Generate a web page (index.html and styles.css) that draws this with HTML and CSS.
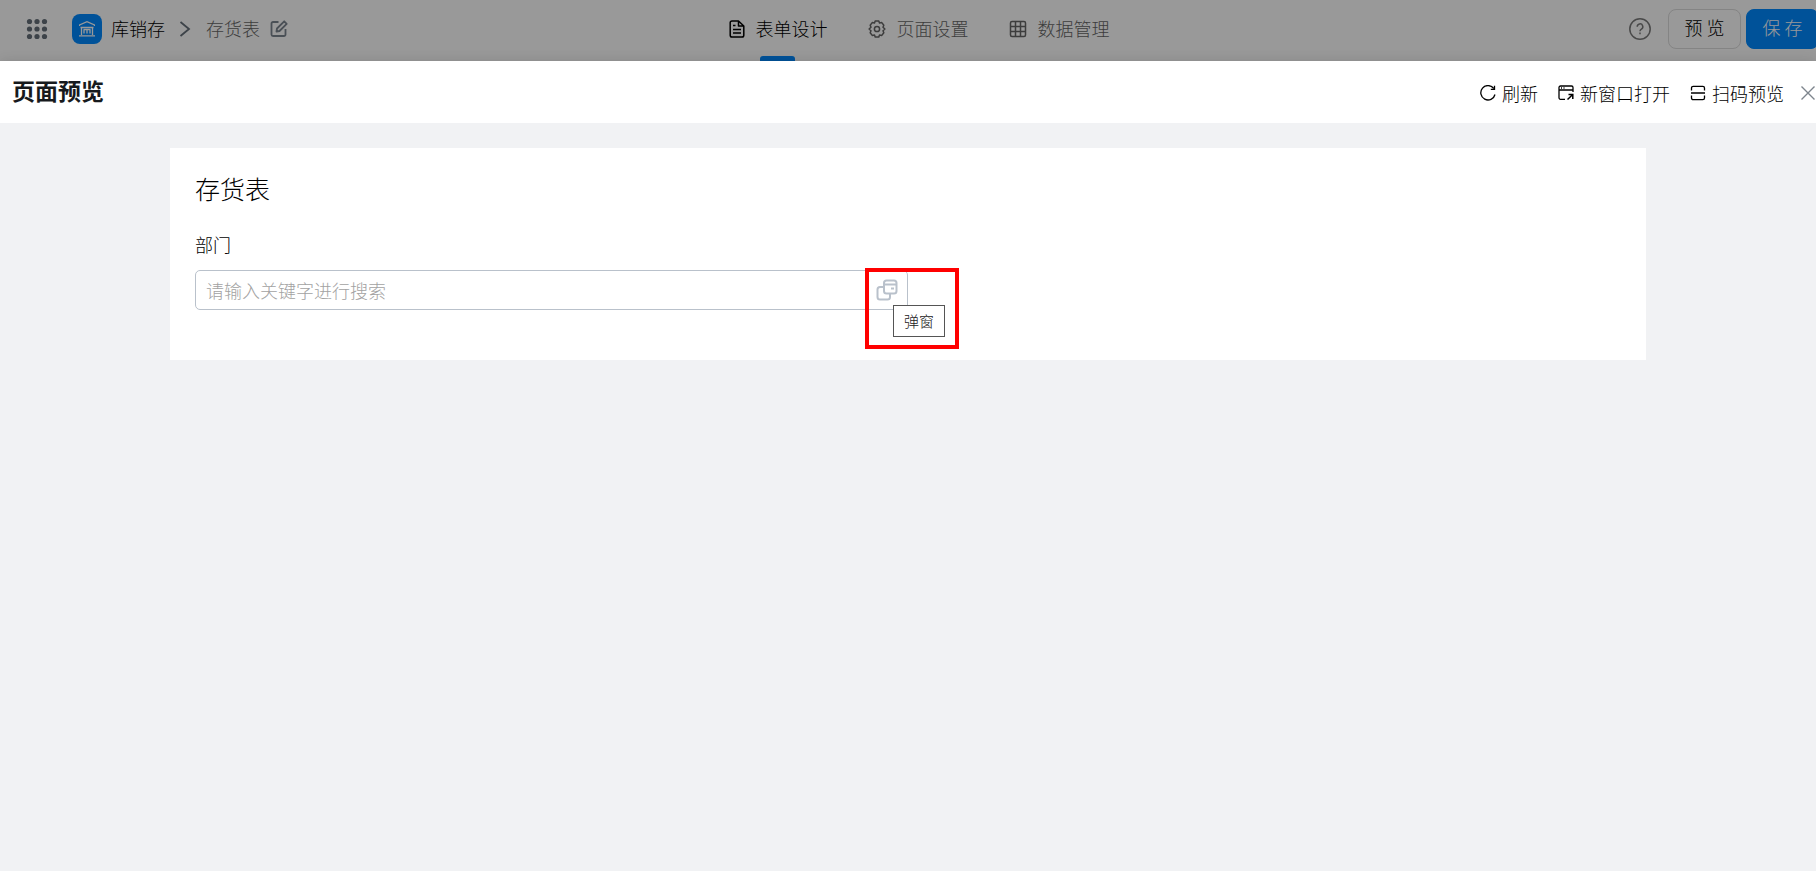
FILE: index.html
```html
<!DOCTYPE html>
<html lang="zh-CN">
<head>
    <meta charset="UTF-8">
    <meta name="viewport" content="width=device-width, initial-scale=1.0">
    <title>页面预览</title>
    <link rel="stylesheet" href="styles.css">
</head>
<body>
    <header class="topbar">
        <div class="crumbs">
            <button class="icon-btn apps" aria-label="应用">
                <svg width="22" height="22" viewBox="0 0 22 22" fill="#66707a">
                    <circle cx="3.5" cy="3.5" r="2.6"/><circle cx="11" cy="3.5" r="2.6"/><circle cx="18.5" cy="3.5" r="2.6"/>
                    <circle cx="3.5" cy="11" r="2.6"/><circle cx="11" cy="11" r="2.6"/><circle cx="18.5" cy="11" r="2.6"/>
                    <circle cx="3.5" cy="18.5" r="2.6"/><circle cx="11" cy="18.5" r="2.6"/><circle cx="18.5" cy="18.5" r="2.6"/>
                </svg>
            </button>
            <span class="app-logo">
                <svg width="16" height="18" viewBox="0 0 16 18" fill="none" stroke="#fff" stroke-width="1.3">
                    <path d="M.5 6V5L8 1.600 15.500 5v1"/>
                    <path d="M1.500 7.500h13M2.500 7.500V15M13.500 7.500V15M0 15.800h16"/>
                    <path d="M5 9.500v4M8 9.500v4M11 9.500v4M4.500 9.500h7"/>
                </svg>
            </span>
            <a href="#" class="crumb">库销存</a>
            <svg class="arrow" width="12" height="18" viewBox="0 0 12 18" fill="none" stroke="#66707a" stroke-width="1.8"><path d="M1.500 2l8.500 7-8.500 7"/></svg>
            <span class="crumb muted">存货表</span>
            <button class="icon-btn edit" aria-label="编辑">
                <svg width="18" height="18" viewBox="0 0 18 18" fill="none" stroke="#7c8590" stroke-width="1.8" stroke-linejoin="round">
                    <path d="M8.500 2H3a1.500 1.500 0 0 0-1.500 1.500v11A1.500 1.500 0 0 0 3 16h11a1.500 1.500 0 0 0 1.500-1.500V9"/>
                    <path d="M6.500 11.500l.5-3L14.200 1.300l2.500 2.500L9.500 11z"/>
                </svg>
            </button>
        </div>

        <nav class="tabs">
            <a href="#" class="tab active">
                <svg width="16" height="18" viewBox="0 0 16 18" fill="none" stroke="currentColor" stroke-width="1.500" stroke-linejoin="round">
                    <path d="M9.500 1H3A1.800 1.800 0 0 0 1.200 2.800v12.400A1.800 1.800 0 0 0 3 17h10a1.800 1.800 0 0 0 1.800-1.800V6zM9.500 1v5h5.300M4 5.500h2.500M4 9.500h8M4 13h8"/>
                </svg>
                <span>表单设计</span>
            </a>
            <a href="#" class="tab">
                <svg width="18" height="18" viewBox="0 0 18 18" fill="none" stroke="currentColor" stroke-width="1.500" stroke-linejoin="round">
                    <path d="M7.200 1h3.600l.7 2 2.300-.4 2 2.600-.8 2 1.900 1.800-1.900 1.800.8 2-2 2.600-2.300-.4-.7 2H7.200l-.7-2-2.300.4-2-2.600.8-2L1.100 9 3 7.200l-.8-2 2-2.600 2.300.4z"/>
                    <circle cx="9" cy="9" r="2.600"/>
                </svg>
                <span>页面设置</span>
            </a>
            <a href="#" class="tab">
                <svg width="18" height="18" viewBox="0 0 18 18" fill="none" stroke="currentColor" stroke-width="1.500">
                    <rect x="1.500" y="1.500" width="15" height="15" rx="1.500"/>
                    <path d="M6.500 1.500v15M11.500 1.500v15M1.500 6.500h15M1.500 11.500h15"/>
                </svg>
                <span>数据管理</span>
            </a>
        </nav>

        <div class="actions">
            <button class="icon-btn help" aria-label="帮助">
                <svg width="22" height="22" viewBox="0 0 22 22" fill="none" stroke="#7b7b7b" stroke-width="1.500">
                    <circle cx="11" cy="11" r="10.200"/>
                    <path d="M8.200 8.700a2.800 2.800 0 1 1 4.200 2.400c-1 .6-1.400 1-1.400 2.100"/>
                    <path d="M11 14.500v1.800"/>
                </svg>
            </button>
            <button class="btn">预 览</button>
            <button class="btn primary">保 存</button>
        </div>
        <div class="mask"></div>
    </header>

    <section class="panel">
        <div class="panel-header">
            <h1>页面预览</h1>
            <div class="tools">
                <button class="tool">
                    <svg width="16" height="16" viewBox="0 0 16 16" fill="none" stroke="currentColor" stroke-width="1.300">
                        <path d="M13.800 3.500A7.200 7.200 0 1 0 15 9.500"/><path d="M14.500 .8v3.500H10.800"/>
                    </svg>
                    刷新
                </button>
                <button class="tool">
                    <svg width="16" height="16" viewBox="0 0 16 16" fill="none" stroke="currentColor" stroke-width="1.300">
                        <path d="M7 14.300H2.500A1.500 1.500 0 0 1 1 12.800V2.500A1.500 1.500 0 0 1 2.500 1h11A1.500 1.500 0 0 1 15 2.500V7M1 5h14M3 3h1M5.500 3h1"/>
                        <path d="M9.500 14.500L14.500 9.700M10.500 9.500H14.800V14" stroke-width="1.500"/>
                    </svg>
                    新窗口打开
                </button>
                <button class="tool">
                    <svg width="16" height="16" viewBox="0 0 16 16" fill="none" stroke="currentColor" stroke-width="1.300">
                        <path d="M1.500 5.500V3A1.700 1.700 0 0 1 3.200 1.300h9.600A1.700 1.700 0 0 1 14.500 3v2.500M1 8h14M1.500 10.500V13a1.700 1.700 0 0 0 1.700 1.700h9.600a1.700 1.700 0 0 0 1.700-1.700v-2.500"/>
                    </svg>
                    扫码预览
                </button>
                <button class="icon-btn close" aria-label="关闭">
                    <svg width="16" height="16" viewBox="0 0 16 16" fill="none" stroke="#7d858d" stroke-width="1.400"><path d="M1.500 1.500l13 13M14.500 1.500l-13 13"/></svg>
                </button>
            </div>
        </div>

        <main class="content">
            <form class="card">
                <h2>存货表</h2>
                <label for="dept">部门</label>
                <div class="field">
                    <input type="text" id="dept" placeholder="请输入关键字进行搜索">
                    <button type="button" class="icon-btn popup" aria-describedby="popup-tip" aria-label="弹窗">
                        <svg width="22" height="22" viewBox="0 0 22 22" fill="none" stroke="#b9c1cb" stroke-width="2">
                            <rect x="8" y="1.500" width="12.500" height="13" rx="2.500"/>
                            <path d="M8 5.500h12.500"/><path d="M15 9.500h3"/>
                            <path d="M8 8H4a2.500 2.500 0 0 0-2.500 2.500V18A2.500 2.500 0 0 0 4 20.500h7.500A2.500 2.500 0 0 0 14 18v-3.500"/>
                        </svg>
                    </button>
                    <span class="tooltip" id="popup-tip" role="tooltip">弹窗</span>
                    <span class="highlight"></span>
                </div>
            </form>
        </main>
    </section>
</body>
</html>
```
FILE: styles.css
```css
* {
    box-sizing: border-box;
}

body {
    margin: 0;
    min-height: 100vh;
    display: flex;
    flex-direction: column;
    overflow-x: hidden;
    font-family: "Noto Sans CJK SC", sans-serif;
    font-size: 18px;
    font-weight: 300;
    line-height: 26px;
    color: #000;
    background: #f1f2f4;
}

a {
    color: inherit;
    text-decoration: none;
}

button,
input {
    font: inherit;
    color: inherit;
}

svg {
    display: block;
    flex: none;
}

.icon-btn {
    display: flex;
    padding: 0;
    border: none;
    background: none;
    cursor: pointer;
}

/* top bar, dimmed by the open panel */
.topbar {
    position: relative;
    display: grid;
    grid-template-columns: 1fr auto 1fr;
    height: 61px;
    padding-bottom: 3px;
    background: #fff;
    white-space: nowrap;
}

.mask {
    position: absolute;
    inset: 0;
    background: rgba(0, 0, 0, 0.4);
}

.crumbs {
    display: flex;
    align-items: center;
    padding-left: 26px;
}

.app-logo {
    display: flex;
    align-items: center;
    justify-content: center;
    width: 30px;
    height: 30px;
    margin: 0 9px 0 24px;
    border-radius: 8px;
    background: #0089ff;
}

.crumb,
.tab span {
    padding-bottom: 2px;
}

.arrow {
    margin: 0 15px 0 14px;
}

.muted {
    color: #666;
}

.edit {
    margin-left: 10px;
}

.tabs {
    display: flex;
    gap: 40px;
    padding-left: 22px;
}

.tab {
    position: relative;
    display: flex;
    align-items: center;
    gap: 11px;
    color: #666;
}

.tab.active {
    color: #000;
}

.tab.active::after {
    content: "";
    position: absolute;
    bottom: -3px;
    left: 50%;
    width: 35px;
    height: 5px;
    margin-left: -18px;
    border-radius: 3px 3px 0 0;
    background: #0089ff;
}

.actions {
    display: flex;
    align-items: center;
    justify-content: flex-end;
    gap: 5px;
    margin-right: -3px;
}

.help {
    margin-right: 12px;
}

.btn {
    width: 73px;
    height: 40px;
    padding: 0 0 4px;
    border: 1px solid #dcdcdc;
    border-radius: 8px;
    background: none;
    cursor: pointer;
}

.btn.primary {
    border-color: #0089ff;
    background: #0089ff;
    color: #fff;
}

/* preview panel */
.panel {
    position: relative;
    flex: 1;
    background: #f1f2f4;
    box-shadow: 0 0 12px rgba(0, 0, 0, 0.12);
}

.panel-header {
    display: flex;
    align-items: center;
    justify-content: space-between;
    height: 62px;
    padding-left: 12px;
    background: #fff;
}

.panel-header h1 {
    margin: 0;
    padding-bottom: 4px;
    font-size: 23px;
    font-weight: 700;
    line-height: 32px;
    color: #171a1d;
}

.tools {
    display: flex;
    align-items: center;
    gap: 20px;
    padding-top: 2px;
}

.tool {
    display: flex;
    align-items: center;
    gap: 6px;
    padding: 0;
    border: none;
    background: none;
    cursor: pointer;
}

.close {
    margin-left: -4px;
}

.content {
    padding: 25px;
}

.card {
    max-width: 1476px;
    margin: 0 auto;
    padding: 23px 25px 50px;
    background: #fff;
}

.card h2 {
    margin: 0 0 26px;
    font-size: 25px;
    font-weight: 300;
    line-height: 34px;
}

.card label {
    display: block;
    margin-bottom: 13px;
}

.field {
    position: relative;
    display: flex;
    align-items: center;
    width: 50%;
    height: 40px;
    padding: 0 9px 0 10px;
    border: 1px solid #b9c1cb;
    border-radius: 5px;
}

.field input {
    flex: 1;
    min-width: 0;
    padding: 0;
    border: none;
    outline: none;
    background: none;
}

.field input::placeholder {
    color: #a2a2a2;
}

.tooltip {
    position: absolute;
    top: 34px;
    right: -38px;
    padding: 4px 10px;
    border: 1px solid #555;
    background: #fff;
    font-size: 15px;
    line-height: 22px;
    color: #222;
}

.highlight {
    position: absolute;
    top: -3px;
    right: -52px;
    width: 94px;
    height: 81px;
    border: 4px solid #f00;
    pointer-events: none;
}
```
